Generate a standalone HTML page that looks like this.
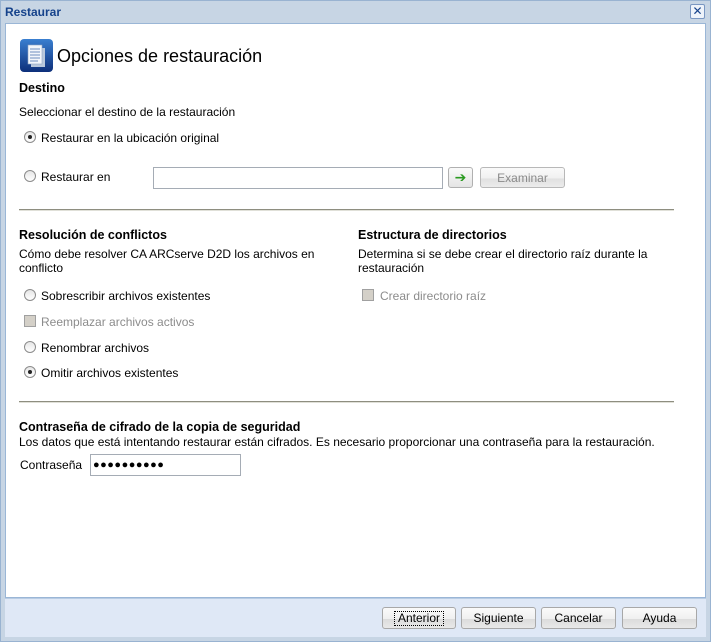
<!DOCTYPE html>
<html><head><meta charset="utf-8"><style>
*{margin:0;padding:0;box-sizing:border-box}
body{width:711px;height:642px;background:#c4d4e6;font-family:"Liberation Sans","DejaVu Sans",sans-serif;font-size:12px;color:#000;position:relative;overflow:hidden}
.a{position:absolute;white-space:nowrap;line-height:14px}
.b{font-weight:bold;font-size:12.5px}
.rad{position:absolute;width:12px;height:12px;border-radius:50%;border:1px solid #8c8c8c;background:linear-gradient(#e6e6e6,#fff)}
.rad.on::after{content:"";position:absolute;left:3px;top:3px;width:4px;height:4px;border-radius:50%;background:#222}
.chk{position:absolute;width:12px;height:12px;border:1px solid #a0a0a0;background:#d4d0c8}
.hr{position:absolute;left:19px;width:655px;height:2px;border-top:1px solid #8e8e80;border-bottom:1px solid #e0e0d8}
.btn{position:absolute;top:607px;height:22px;border:1px solid #a8a8a8;border-radius:3px;background:linear-gradient(#fafafa 0,#f0f0f0 55%,#dcdcdc 56%,#e8e8e8 100%);text-align:center;line-height:20px;font-size:12px}
</style></head><body>
<div style="position:absolute;left:0;top:0;width:711px;height:642px;border:1px solid #99b3d1;background:#c7d5e4"></div>
<div class="a" style="left:5px;top:5px;color:#15428b;font-weight:bold;font-size:12px">Restaurar</div>
<div style="position:absolute;left:690px;top:4px;width:15px;height:15px;border:1px solid #7a97c2;border-radius:2px;background:#eef3fa;color:#15428b;font-size:12px;line-height:13px;text-align:center">✕</div>
<div style="position:absolute;left:5px;top:23px;width:701px;height:575px;background:#fff;border:1px solid #9ab6d6"></div>
<svg style="position:absolute;left:20px;top:39px" width="33" height="33" viewBox="0 0 33 33">
<defs><linearGradient id="g" x1="0" y1="0" x2="0" y2="1"><stop offset="0" stop-color="#3a7fd0"/><stop offset="1" stop-color="#0d2f7a"/></linearGradient></defs>
<rect x="0" y="0" width="33" height="33" rx="4" fill="url(#g)"/>
<rect x="11" y="9" width="14" height="19" fill="#b9c8dc"/>
<rect x="8" y="6" width="14" height="19" fill="#f2f6fb" stroke="#8ea4c4" stroke-width="0.6"/>
<g stroke="#6f8fbf" stroke-width="1"><line x1="10" y1="10" x2="20" y2="10"/><line x1="10" y1="13" x2="20" y2="13"/><line x1="10" y1="16" x2="20" y2="16"/><line x1="10" y1="19" x2="20" y2="19"/><line x1="10" y1="22" x2="18" y2="22"/></g>
</svg>
<div class="a" style="left:57px;top:46px;font-size:18px;line-height:20px">Opciones de restauración</div>
<div class="a b" style="left:19px;top:81px">Destino</div>
<div class="a" style="left:19px;top:105px">Seleccionar el destino de la restauración</div>
<div class="rad on" style="left:24px;top:131px"></div>
<div class="a" style="left:41px;top:131px">Restaurar en la ubicación original</div>
<div class="rad" style="left:24px;top:170px"></div>
<div class="a" style="left:41px;top:170px">Restaurar en</div>
<div style="position:absolute;left:153px;top:167px;width:290px;height:22px;border:1px solid #a5acb5;background:#fff"></div>
<div style="position:absolute;left:448px;top:167px;width:25px;height:21px;border:1px solid #b0b0b0;border-radius:3px;background:linear-gradient(#fafafa,#e4e4e4);color:#2a9a20;font-weight:bold;text-align:center;line-height:19px;font-size:14px">➔</div>
<div style="position:absolute;left:480px;top:167px;width:85px;height:21px;border:1px solid #b8b8b8;border-radius:3px;background:linear-gradient(#fafafa 0,#f0f0f0 55%,#e0e0e0 56%,#ececec);color:#8a8a8a;text-align:center;line-height:20px;font-size:12px">Examinar</div>
<div class="hr" style="top:209px"></div>
<div class="a b" style="left:19px;top:228px">Resolución de conflictos</div>
<div class="a b" style="left:358px;top:228px">Estructura de directorios</div>
<div class="a" style="left:19px;top:247px">Cómo debe resolver CA ARCserve D2D los archivos en<br>conflicto</div>
<div class="a" style="left:358px;top:247px">Determina si se debe crear el directorio raíz durante la<br>restauración</div>
<div class="rad" style="left:24px;top:289px"></div>
<div class="a" style="left:41px;top:289px">Sobrescribir archivos existentes</div>
<div class="chk" style="left:24px;top:315px"></div>
<div class="a" style="left:41px;top:315px;color:#8c8c8c">Reemplazar archivos activos</div>
<div class="rad" style="left:24px;top:341px"></div>
<div class="a" style="left:41px;top:341px">Renombrar archivos</div>
<div class="rad on" style="left:24px;top:366px"></div>
<div class="a" style="left:41px;top:366px">Omitir archivos existentes</div>
<div class="chk" style="left:362px;top:289px"></div>
<div class="a" style="left:380px;top:289px;color:#8c8c8c">Crear directorio raíz</div>
<div class="hr" style="top:401px"></div>
<div class="a b" style="left:19px;top:420px">Contraseña de cifrado de la copia de seguridad</div>
<div class="a" style="left:19px;top:435px">Los datos que está intentando restaurar están cifrados. Es necesario proporcionar una contraseña para la restauración.</div>
<div class="a" style="left:20px;top:458px">Contraseña</div>
<div style="position:absolute;left:90px;top:454px;width:151px;height:22px;border:1px solid #a5acb5;background:#fff;font-size:11px;line-height:20px;padding-left:2px;letter-spacing:0.5px">●●●●●●●●●●</div>
<div style="position:absolute;left:5px;top:598px;width:701px;height:39px;background:#dfe8f6;border-top:1px solid #b8cce4"></div>
<div class="btn" style="left:382px;width:74px"><span style="border:1px dotted #000;padding:0 3px;line-height:13px;display:inline-block;margin-top:3px">Anterior</span></div>
<div class="btn" style="left:461px;width:75px">Siguiente</div>
<div class="btn" style="left:541px;width:75px">Cancelar</div>
<div class="btn" style="left:622px;width:75px">Ayuda</div>
</body></html>
